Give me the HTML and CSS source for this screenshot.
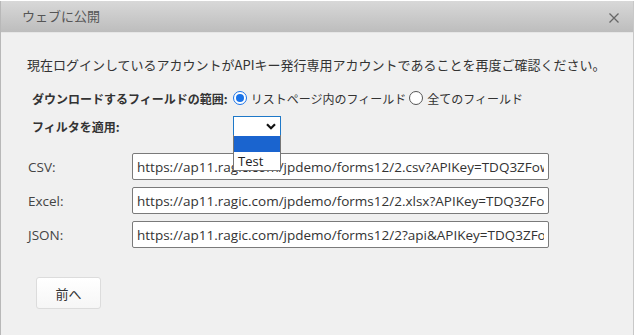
FILE: index.html
```html
<!DOCTYPE html>
<html lang="ja">
<head>
    <meta charset="UTF-8">
    <meta name="viewport" content="width=device-width, initial-scale=1.0">
    <title>ウェブに公開</title>
    <link rel="stylesheet" href="styles.css">
</head>
<body>
    <div class="dialog">
        <div class="dialog-header">
            <span class="dialog-title">ウェブに公開</span>
            <svg class="dialog-close" width="10" height="10" viewBox="0 0 10 10"><path d="M0.5 0.5 L9.5 9.5 M9.5 0.5 L0.5 9.5" stroke="#666" stroke-width="1.3"/></svg>
        </div>

        <div class="dialog-body">
            <p class="notice">現在ログインしているアカウントがAPIキー発行専用アカウントであることを再度ご確認ください。</p>

            <div class="option-row">
                <span class="option-label">ダウンロードするフィールドの範囲:</span>
                <label class="radio"><span class="radio-dot checked"></span>リストページ内のフィールド</label>
                <label class="radio"><span class="radio-dot"></span>全てのフィールド</label>
            </div>

            <div class="option-row filter-row">
                <span class="option-label">フィルタを適用:</span>
                <div class="select-wrap">
                    <div class="select-box">
                        <svg width="10" height="7" viewBox="0 0 10 7"><path d="M1 1.2 L5 5.2 L9 1.2" fill="none" stroke="#111" stroke-width="2.2"/></svg>
                    </div>
                    <ul class="select-list">
                        <li class="selected">&nbsp;</li>
                        <li>Test</li>
                    </ul>
                </div>
            </div>

            <div class="links">
                <div class="link-row">
                    <span class="link-label">CSV:</span>
                    <input class="link-input" type="text" value="https://ap11.ragic.com/jpdemo/forms12/2.csv?APIKey=TDQ3ZFowSkRsdHZ" readonly>
                </div>
                <div class="link-row">
                    <span class="link-label">Excel:</span>
                    <input class="link-input" type="text" value="https://ap11.ragic.com/jpdemo/forms12/2.xlsx?APIKey=TDQ3ZFowSkRsdHZ" readonly>
                </div>
                <div class="link-row">
                    <span class="link-label">JSON:</span>
                    <input class="link-input" type="text" value="https://ap11.ragic.com/jpdemo/forms12/2?api&amp;APIKey=TDQ3ZFowSkRsdHZ" readonly>
                </div>
            </div>

            <button class="btn-prev">前へ</button>
        </div>
    </div>
</body>
</html>
```

FILE: styles.css
```css
body {
    margin: 0;
    background-color: #fff;
    font-family: "Open Sans", "Noto Sans CJK JP", sans-serif;
    font-size: 13px;
    color: #333;
}
.dialog {
    width: 632px;
    height: 334px;
    margin-top: 1px;
    border-left: 1px solid #b8b8b8;
    border-right: 1px solid #c8c8c8;
    background-color: #f0f0f0;
    display: flex;
    flex-direction: column;
}
.dialog-header {
    height: 31px;
    display: flex;
    align-items: center;
    justify-content: space-between;
    padding: 0 14px 0 21px;
    background: linear-gradient(#d8d8d8, #bdbdbd);
    border-bottom: 1px solid #e6e6e6;
}
.dialog-title {
    font-family: "Noto Sans CJK JP", sans-serif;
    font-size: 13px;
    color: #555;
    margin-top: -2px;
}
.dialog-close {
    margin-top: 2px;
}
.dialog-body {
    padding: 22px 0 0 26px;
    font-family: "Noto Sans CJK JP", sans-serif;
}
.notice {
    margin: 0;
    line-height: 20px;
}
.option-row {
    display: flex;
    align-items: center;
    margin: 13px 0 0 5px;
    height: 20px;
    font-size: 12px;
}
.option-label {
    font-weight: bold;
    margin-right: 5px;
}
.radio {
    display: flex;
    align-items: center;
    margin-right: 3px;
}
.radio-dot {
    width: 12px;
    height: 12px;
    border: 1px solid #555;
    border-radius: 50%;
    background-color: #fff;
    margin-right: 4px;
    position: relative;
}
.radio-dot.checked {
    border: 1px solid #1a73e8;
}
.radio-dot.checked::after {
    content: "";
    position: absolute;
    left: 2px;
    top: 2px;
    width: 8px;
    height: 8px;
    border-radius: 50%;
    background-color: #1a73e8;
}
.filter-row {
    margin-top: 8px;
}
.filter-row .option-label {
    width: 196px;
}
.select-wrap {
    position: relative;
}
.select-box {
    width: 46px;
    height: 18px;
    border: 1px solid #1e78c8;
    background-color: #fff;
    display: flex;
    align-items: center;
    justify-content: flex-end;
}
.select-box svg {
    margin-right: 4px;
}
.select-list {
    position: absolute;
    left: 0;
    top: 19px;
    width: 46px;
    margin: 0;
    padding: 0;
    list-style: none;
    border: 1px solid #767676;
    border-top: none;
    background-color: #fff;
    z-index: 2;
}
.select-list li {
    height: 16px;
    line-height: 16px;
    padding-left: 4px;
    font-family: "Open Sans", sans-serif;
    font-size: 13px;
    color: #222;
}
.select-list li.selected {
    background-color: #1a64cf;
    margin-top: 1px;
}
.select-list li + li {
    height: 18px;
    line-height: 18px;
}
.links {
    margin-top: 17px;
    display: flex;
    flex-direction: column;
    gap: 7px;
}
.link-row {
    display: flex;
    align-items: center;
}
.link-label {
    width: 104px;
    padding-left: 1px;
    font-family: "Open Sans", sans-serif;
    font-size: 13.5px;
    color: #444;
}
.link-input {
    box-sizing: border-box;
    width: 417px;
    height: 27px;
    padding: 0 4px;
    border: 1px solid #7a7a7a;
    border-radius: 2px;
    background-color: #fff;
    font-family: "Open Sans", sans-serif;
    font-size: 13.5px;
    color: #333;
    outline: none;
}
.btn-prev {
    margin: 29px 0 0 9px;
    width: 65px;
    height: 32px;
    border: 1px solid #dcdcdc;
    border-radius: 3px;
    background: linear-gradient(#fff, #f6f6f6);
    font-family: "Noto Sans CJK JP", sans-serif;
    font-size: 13px;
    color: #333;
}
```
